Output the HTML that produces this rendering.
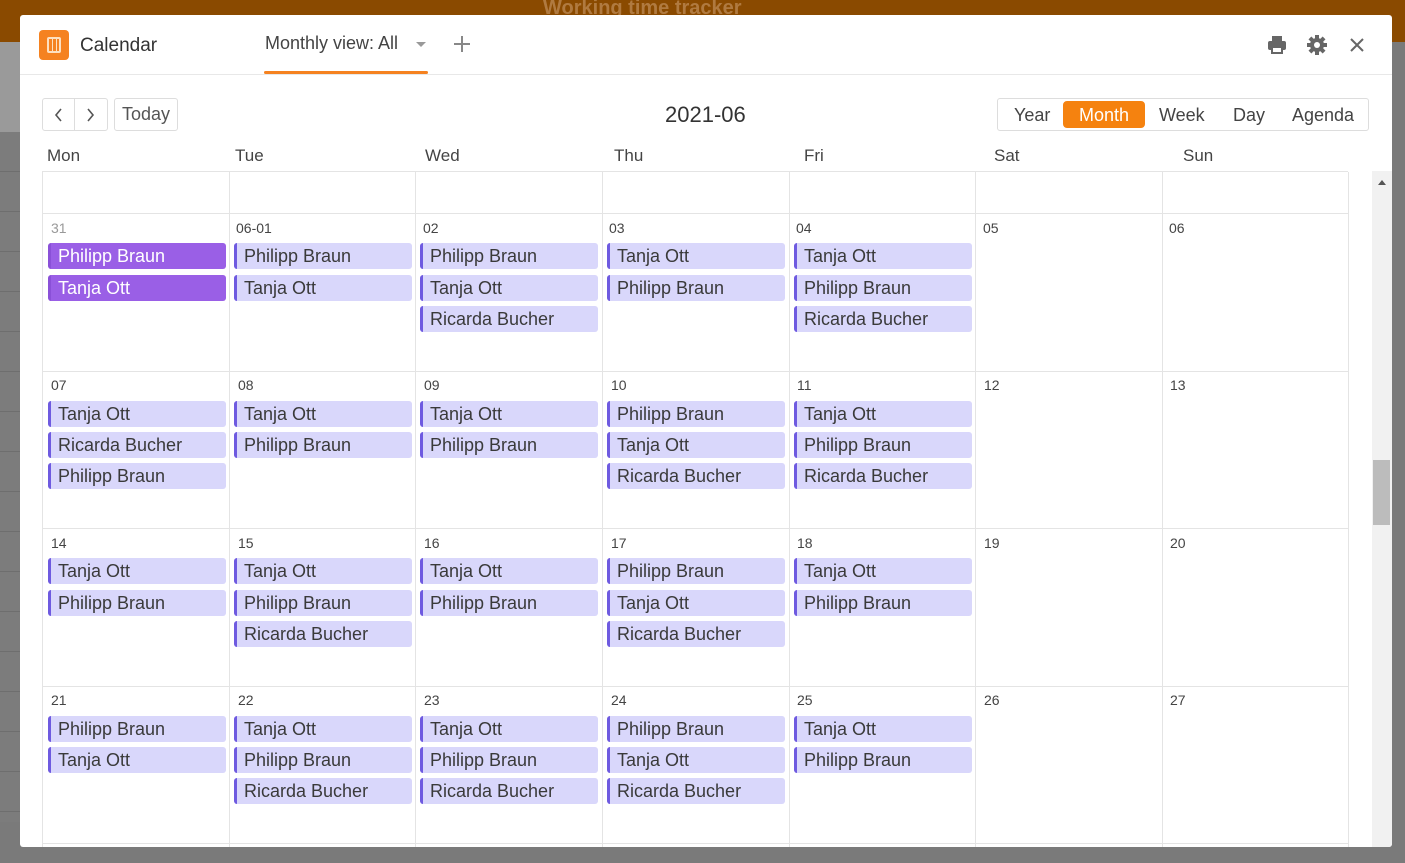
<!DOCTYPE html>
<html><head><meta charset="utf-8"><style>
*{box-sizing:border-box;margin:0;padding:0}
body{width:1405px;height:863px;overflow:hidden;background:#7a7a7a;font-family:"Liberation Sans",sans-serif;position:relative;color:#333}
.topbar{position:absolute;left:0;top:0;width:1405px;height:42px;background:#8a4a00}
.topbar .t{position:absolute;left:543px;top:-3px;font-size:20px;font-weight:bold;color:#b07a40}
.lside{position:absolute;left:0;top:42px;width:20px;height:90px;background:#9a9a9a}
.lside2{position:absolute;left:0;top:132px;width:20px;height:690px;background:repeating-linear-gradient(180deg,#7c7c7c 0 39px,#6e6e6e 39px 40px)}
.modal{position:absolute;left:20px;top:15px;width:1372px;height:832px;background:#fff;border-radius:3px;overflow:hidden}
.hdr{position:absolute;left:0;top:0;width:100%;height:60px;border-bottom:1px solid #e8e8e8}
.logo{position:absolute;left:19px;top:15px;width:30px;height:30px;background:#f58220;border-radius:4px}
.logo i{position:absolute;left:8px;top:7px;width:14px;height:16px;border:2px solid #fde0c0;border-radius:2px;background:repeating-linear-gradient(90deg,#f58220 0 3px,#fde0c0 3px 4px)}
.title{position:absolute;left:60px;top:20px;font-size:19px;color:#333}
.tab{position:absolute;left:245px;top:18px;font-size:18px;color:#444}
.tabline{position:absolute;left:244px;top:56px;width:164px;height:3px;background:#f58220;border-radius:2px}
.caret{position:absolute;left:396px;top:27px;width:0;height:0;border-left:5px solid transparent;border-right:5px solid transparent;border-top:5px solid #999}
.dow{position:absolute;top:131px;font-size:17px;color:#444}
.btn{position:absolute;border:1px solid #ddd;border-radius:3px;background:#fff;font-size:18px;color:#555;text-align:center}
.month{position:absolute;left:645px;top:87px;font-size:22px;color:#333}
.views{position:absolute;left:977px;top:83px;width:372px;height:33px;border:1px solid #ddd;border-radius:3px;font-size:18px;color:#444}
.views span{position:absolute;top:6px}
.views .on{left:65px;top:2px;width:82px;height:27px;background:#f5820f;color:#fff;border-radius:4px;text-align:center;padding-top:4px}
.grid{position:absolute;left:22px;top:156px;width:1306px;height:680px;border-top:1px solid #e4e4e4}
.vl{position:absolute;top:0;width:1px;height:680px;background:#e4e4e4}
.hl{position:absolute;left:0;width:1306px;height:1px;background:#e4e4e4}
.dn{position:absolute;font-size:14px;color:#444}
.ev{position:absolute;width:178px;height:26px;background:#d9d7fb;border-left:3px solid #6e5ae0;border-radius:3px;font-size:18px;color:#3a3a3a;padding-left:7px;line-height:26px;white-space:nowrap}
.ev.s{background:#9a5fe6;border-left-color:#8a50d8;color:#fff}
.sb{position:absolute;left:1352px;top:156px;width:20px;height:676px;background:#f1f1f1}
.sb .th{position:absolute;left:1px;top:289px;width:17px;height:65px;background:#bcbcbc}
.sb .ar{position:absolute;left:6px;top:9px;border-left:4px solid transparent;border-right:4px solid transparent;border-bottom:5px solid #555}
</style></head><body>
<div class="topbar"><span class="t">Working time tracker</span></div>
<div class="lside"></div><div class="lside2"></div>
<div class="modal">
<div class="hdr">
<div class="logo"><i></i></div>
<div class="title">Calendar</div>
<div class="tab">Monthly view: All</div><div class="caret"></div>
<div class="tabline"></div>
<svg style="position:absolute;left:433px;top:20px" width="18" height="18" viewBox="0 0 18 18"><path d="M9 1V17M1 9H17" stroke="#888" stroke-width="2"/></svg>
<svg style="position:absolute;left:1247px;top:20px" width="20" height="20" viewBox="0 0 20 20"><rect x="5" y="1" width="10" height="5" fill="#666"/><rect x="1" y="6" width="18" height="9" rx="2" fill="#666"/><rect x="5" y="12" width="10" height="6" fill="#fff" stroke="#666" stroke-width="2"/></svg>
<svg style="position:absolute;left:1287px;top:20px" width="20" height="20" viewBox="0 0 20 20"><g fill="#666"><circle cx="10" cy="10" r="7"/><rect x="8" y="0" width="4" height="20"/><rect x="0" y="8" width="20" height="4"/><rect x="8" y="0" width="4" height="20" transform="rotate(45 10 10)"/><rect x="8" y="0" width="4" height="20" transform="rotate(-45 10 10)"/></g><circle cx="10" cy="10" r="3" fill="#fff"/></svg>
<svg style="position:absolute;left:1329px;top:22px" width="16" height="16" viewBox="0 0 16 16"><path d="M2 2L14 14M14 2L2 14" stroke="#666" stroke-width="2"/></svg>
</div>
<div class="btn" style="left:22px;top:83px;width:66px;height:33px"></div>
<div style="position:absolute;left:54px;top:84px;width:1px;height:31px;background:#ddd"></div>
<svg style="position:absolute;left:34px;top:92px" width="10" height="16"><path d="M7 2L2 8L7 14" stroke="#555" stroke-width="1.6" fill="none"/></svg>
<svg style="position:absolute;left:65px;top:92px" width="10" height="16"><path d="M3 2L8 8L3 14" stroke="#555" stroke-width="1.6" fill="none"/></svg>
<div class="btn" style="left:94px;top:83px;width:64px;height:33px;padding-top:5px">Today</div>
<div class="month">2021-06</div>
<div class="views"><span style="left:16px">Year</span><span class="on">Month</span><span style="left:161px">Week</span><span style="left:235px">Day</span><span style="left:294px">Agenda</span></div>
<div class="dow" style="left:27px">Mon</div><div class="dow" style="left:215px">Tue</div><div class="dow" style="left:405px">Wed</div><div class="dow" style="left:594px">Thu</div><div class="dow" style="left:784px">Fri</div><div class="dow" style="left:974px">Sat</div><div class="dow" style="left:1163px">Sun</div>
<div class="grid">
<div class="vl" style="left:0"></div><div class="vl" style="left:187px"></div><div class="vl" style="left:373px"></div><div class="vl" style="left:560px"></div><div class="vl" style="left:747px"></div><div class="vl" style="left:933px"></div><div class="vl" style="left:1120px"></div><div class="vl" style="left:1306px"></div>
<div class="hl" style="top:41px"></div><div class="hl" style="top:199px"></div><div class="hl" style="top:356px"></div><div class="hl" style="top:514px"></div><div class="hl" style="top:671px"></div>
<div class="dn" style="left:9px;top:48px;color:#999">31</div>
<div class="dn" style="left:194px;top:48px">06-01</div>
<div class="dn" style="left:381px;top:48px">02</div>
<div class="dn" style="left:567px;top:48px">03</div>
<div class="dn" style="left:754px;top:48px">04</div>
<div class="dn" style="left:941px;top:48px">05</div>
<div class="dn" style="left:1127px;top:48px">06</div>
<div class="ev s" style="left:6px;top:71px">Philipp Braun</div>
<div class="ev s" style="left:6px;top:103px">Tanja Ott</div>
<div class="ev" style="left:192px;top:71px">Philipp Braun</div>
<div class="ev" style="left:192px;top:103px">Tanja Ott</div>
<div class="ev" style="left:378px;top:71px">Philipp Braun</div>
<div class="ev" style="left:378px;top:103px">Tanja Ott</div>
<div class="ev" style="left:378px;top:134px">Ricarda Bucher</div>
<div class="ev" style="left:565px;top:71px">Tanja Ott</div>
<div class="ev" style="left:565px;top:103px">Philipp Braun</div>
<div class="ev" style="left:752px;top:71px">Tanja Ott</div>
<div class="ev" style="left:752px;top:103px">Philipp Braun</div>
<div class="ev" style="left:752px;top:134px">Ricarda Bucher</div>
<div class="dn" style="left:9px;top:205px">07</div>
<div class="dn" style="left:196px;top:205px">08</div>
<div class="dn" style="left:382px;top:205px">09</div>
<div class="dn" style="left:569px;top:205px">10</div>
<div class="dn" style="left:755px;top:205px">11</div>
<div class="dn" style="left:942px;top:205px">12</div>
<div class="dn" style="left:1128px;top:205px">13</div>
<div class="ev" style="left:6px;top:229px">Tanja Ott</div>
<div class="ev" style="left:6px;top:260px">Ricarda Bucher</div>
<div class="ev" style="left:6px;top:291px">Philipp Braun</div>
<div class="ev" style="left:192px;top:229px">Tanja Ott</div>
<div class="ev" style="left:192px;top:260px">Philipp Braun</div>
<div class="ev" style="left:378px;top:229px">Tanja Ott</div>
<div class="ev" style="left:378px;top:260px">Philipp Braun</div>
<div class="ev" style="left:565px;top:229px">Philipp Braun</div>
<div class="ev" style="left:565px;top:260px">Tanja Ott</div>
<div class="ev" style="left:565px;top:291px">Ricarda Bucher</div>
<div class="ev" style="left:752px;top:229px">Tanja Ott</div>
<div class="ev" style="left:752px;top:260px">Philipp Braun</div>
<div class="ev" style="left:752px;top:291px">Ricarda Bucher</div>
<div class="dn" style="left:9px;top:363px">14</div>
<div class="dn" style="left:196px;top:363px">15</div>
<div class="dn" style="left:382px;top:363px">16</div>
<div class="dn" style="left:569px;top:363px">17</div>
<div class="dn" style="left:755px;top:363px">18</div>
<div class="dn" style="left:942px;top:363px">19</div>
<div class="dn" style="left:1128px;top:363px">20</div>
<div class="ev" style="left:6px;top:386px">Tanja Ott</div>
<div class="ev" style="left:6px;top:418px">Philipp Braun</div>
<div class="ev" style="left:192px;top:386px">Tanja Ott</div>
<div class="ev" style="left:192px;top:418px">Philipp Braun</div>
<div class="ev" style="left:192px;top:449px">Ricarda Bucher</div>
<div class="ev" style="left:378px;top:386px">Tanja Ott</div>
<div class="ev" style="left:378px;top:418px">Philipp Braun</div>
<div class="ev" style="left:565px;top:386px">Philipp Braun</div>
<div class="ev" style="left:565px;top:418px">Tanja Ott</div>
<div class="ev" style="left:565px;top:449px">Ricarda Bucher</div>
<div class="ev" style="left:752px;top:386px">Tanja Ott</div>
<div class="ev" style="left:752px;top:418px">Philipp Braun</div>
<div class="dn" style="left:9px;top:520px">21</div>
<div class="dn" style="left:196px;top:520px">22</div>
<div class="dn" style="left:382px;top:520px">23</div>
<div class="dn" style="left:569px;top:520px">24</div>
<div class="dn" style="left:755px;top:520px">25</div>
<div class="dn" style="left:942px;top:520px">26</div>
<div class="dn" style="left:1128px;top:520px">27</div>
<div class="ev" style="left:6px;top:544px">Philipp Braun</div>
<div class="ev" style="left:6px;top:575px">Tanja Ott</div>
<div class="ev" style="left:192px;top:544px">Tanja Ott</div>
<div class="ev" style="left:192px;top:575px">Philipp Braun</div>
<div class="ev" style="left:192px;top:606px">Ricarda Bucher</div>
<div class="ev" style="left:378px;top:544px">Tanja Ott</div>
<div class="ev" style="left:378px;top:575px">Philipp Braun</div>
<div class="ev" style="left:378px;top:606px">Ricarda Bucher</div>
<div class="ev" style="left:565px;top:544px">Philipp Braun</div>
<div class="ev" style="left:565px;top:575px">Tanja Ott</div>
<div class="ev" style="left:565px;top:606px">Ricarda Bucher</div>
<div class="ev" style="left:752px;top:544px">Tanja Ott</div>
<div class="ev" style="left:752px;top:575px">Philipp Braun</div>
</div>
<div class="sb"><div class="ar"></div><div class="th"></div></div>
</div>
</body></html>
